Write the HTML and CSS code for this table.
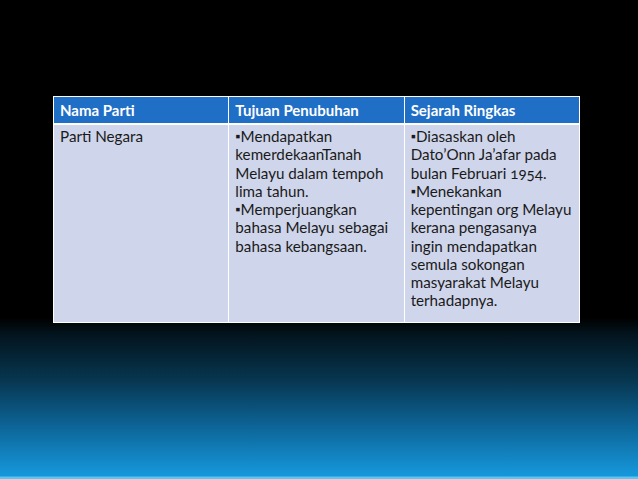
FILE: index.html
```html
<!DOCTYPE html>
<html>
<head>
<meta charset="utf-8">
<link rel="stylesheet" href="styles.css">
</head>
<body>
<div class="slide">
  <table class="parti">
    <thead>
      <tr>
        <th>Nama Parti</th>
        <th>Tujuan Penubuhan</th>
        <th>Sejarah Ringkas</th>
      </tr>
    </thead>
    <tbody>
      <tr>
        <td>Parti Negara</td>
        <td><span class="b">▪</span>Mendapatkan<br>kemerdekaanTanah<br>Melayu dalam tempoh<br>lima tahun.<br><span class="b">▪</span>Memperjuangkan<br>bahasa Melayu sebagai<br>bahasa kebangsaan.</td>
        <td><span class="b">▪</span>Diasaskan oleh<br>Dato’Onn Ja’afar pada<br>bulan Februari <span class="num">1954</span>.<br><span class="b">▪</span>Menekankan<br>kepentingan org Melayu<br>kerana pengasanya<br>ingin mendapatkan<br>semula sokongan<br>masyarakat Melayu<br>terhadapnya.</td>
      </tr>
    </tbody>
  </table>
</div>
</body>
</html>
```
FILE: styles.css
```css
html, body {
  margin: 0;
  padding: 0;
}
body {
  width: 638px;
  height: 479px;
  overflow: hidden;
}
.slide {
  width: 638px;
  height: 479px;
  box-sizing: border-box;
  padding: 96px 0 0 53px;
  background:
    linear-gradient(to bottom, #000 0, #000 318px, #03141d 334px, #073650 380px, #0c5e8e 420px, #1594d7 472px, #1696da 476px, #5cc6f2 477px, #5cc6f2 479px);
  font-family: "Lato", "Open Sans", sans-serif;
}
.parti {
  border-collapse: collapse;
  width: 527px;
  table-layout: fixed;
  border: 1px solid #ffffff;
}
.parti th, .parti td {
  border-left: 1px solid #ffffff;
  border-right: 1px solid #ffffff;
  text-align: left;
  vertical-align: top;
  padding: 0 6px;
}
.parti th {
  background: #1f6fc6;
  color: #ffffff;
  font-weight: bold;
  font-size: 15px;
  height: 25px;
  line-height: 25px;
  padding-top: 1px;
  padding-bottom: 0;
  border-bottom: 2px solid #ffffff;
}
.parti td {
  background: #cfd5ea;
  color: #1a1a1a;
  font-size: 15.2px;
  line-height: 18.25px;
  padding-top: 2px;
  padding-bottom: 12px;
  white-space: nowrap;
}
.b {
  font-size: 13px;
  vertical-align: 1px;
}
.num {
  font-variant-numeric: oldstyle-nums;
}
```
